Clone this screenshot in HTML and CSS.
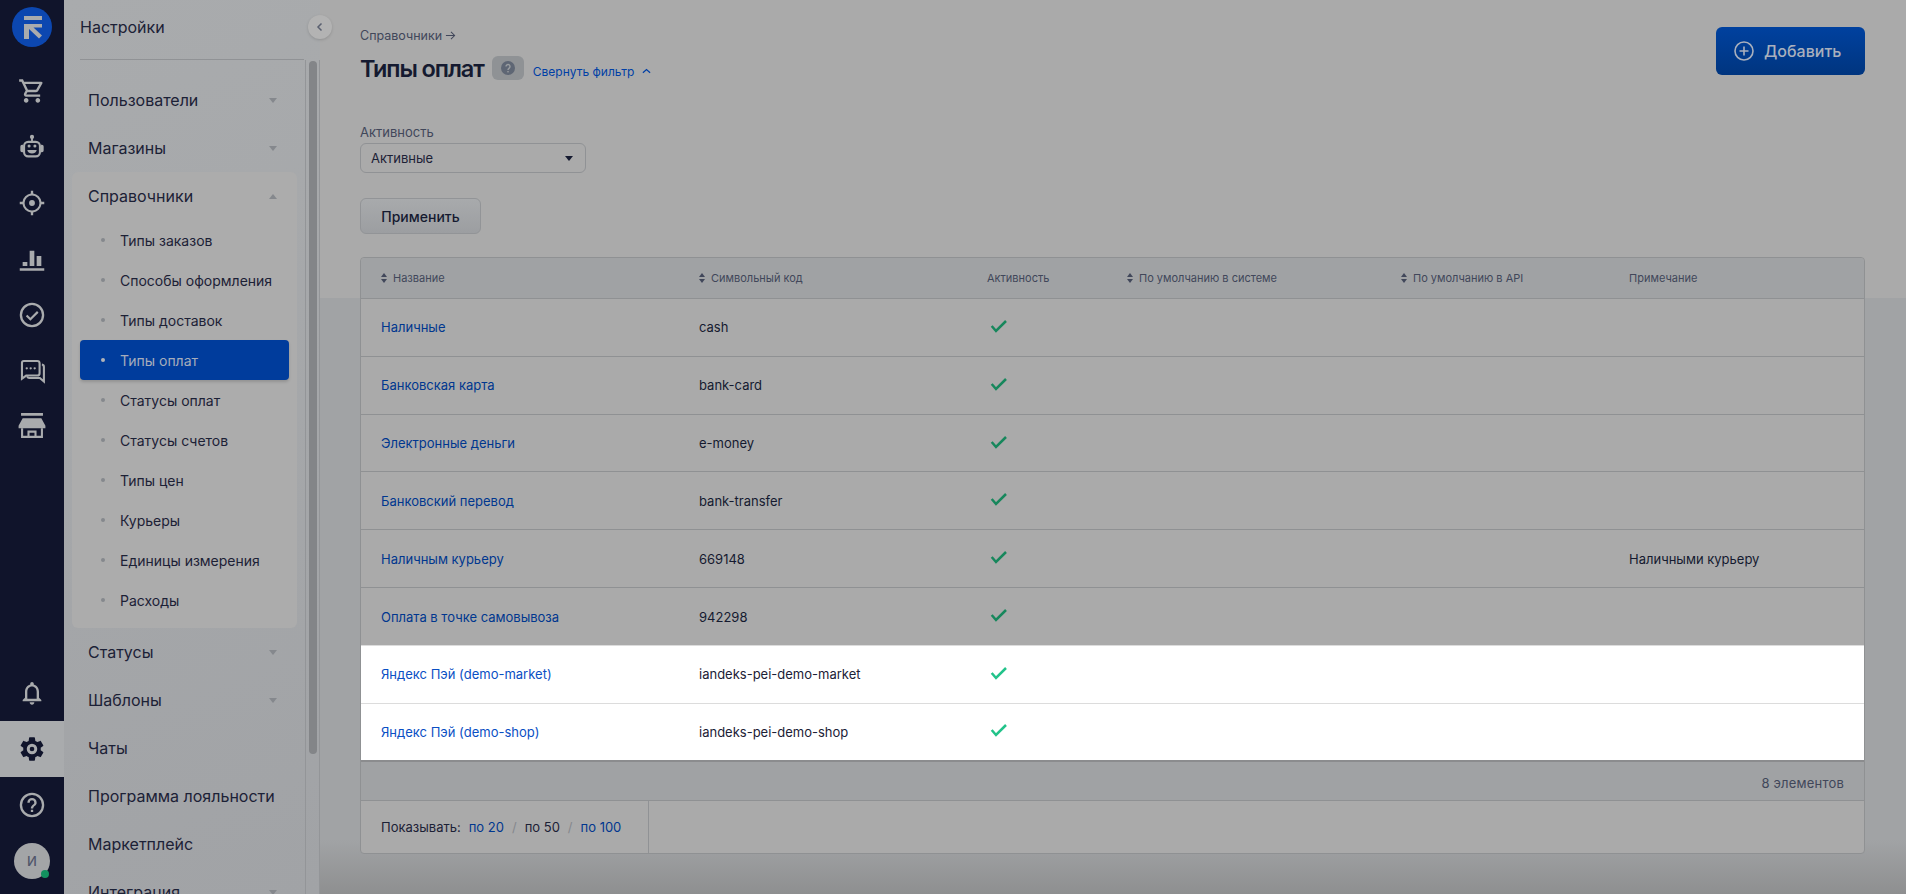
FILE: index.html
```html
<!DOCTYPE html>
<html lang="ru">
<head>
<meta charset="utf-8">
<title>Типы оплат</title>
<link rel="stylesheet" href="styles.css">
</head>
<body>
<div class="app">
  <nav class="rail">
    <a class="rail-logo"><svg viewBox="0 0 40 40" width="40" height="40"><circle cx="20" cy="20" r="20" fill="#0c47b0"/><path d="M12 9h18v4H12zM12 17h18v3.500h-8.500L30 28.500 27 31.500 17 22v10h-5z" fill="#a9abad"/></svg></a>
    <a class="rail-item"><svg viewBox="0 0 24 24" class="ico"><path d="M15.550 13c.75 0 1.410-.41 1.750-1.030l3.580-6.490A.996.996 0 0 0 20.010 4H5.210l-.94-2H1v2h2l3.600 7.590-1.350 2.440C4.520 15.370 5.480 17 7 17h12v-2H7l1.100-2h7.450zM6.160 6h12.150l-2.760 5H8.530L6.160 6zM7 18c-1.100 0-1.990.9-1.990 2S5.900 22 7 22s2-.9 2-2-.9-2-2-2zm10 0c-1.100 0-1.990.9-1.990 2s.89 2 1.990 2 2-.9 2-2-.9-2-2-2z"/></svg></a>
    <a class="rail-item"><svg viewBox="0 0 24 24" class="ico"><circle cx="12" cy="3.400" r="1.800"/><rect class="ico-cut" x="5.200" y="7.600" width="13.600" height="12.400" rx="3.500"/><path d="M11.200 4h1.600v4h-1.600zM2 11.500A1.500 1.500 0 0 1 3.500 10H4.300v6.500H3.500A1.500 1.500 0 0 1 2 15zM22 11.500A1.500 1.500 0 0 0 20.500 10H19.700v6.500H20.500A1.500 1.500 0 0 0 22 15zM8 14.500h8a4 3 0 0 1-8 0z"/><circle cx="9.500" cy="11.200" r="1.300"/><circle cx="14.500" cy="11.200" r="1.300"/></svg></a>
    <a class="rail-item"><svg viewBox="0 0 24 24" class="ico"><path d="M12 9.500a2.500 2.500 0 1 0 0 5 2.500 2.500 0 0 0 0-5zm8.100 1.500A8.200 8.200 0 0 0 13 3.900V1.500h-2v2.400A8.200 8.200 0 0 0 3.900 11H1.500v2h2.400A8.200 8.200 0 0 0 11 20.100v2.400h2v-2.400A8.200 8.200 0 0 0 20.100 13h2.400v-2zM12 18.400a6.400 6.400 0 1 1 0-12.800 6.400 6.400 0 0 1 0 12.800z"/></svg></a>
    <a class="rail-item"><svg viewBox="0 0 24 24" class="ico"><path d="M1.500 20h21v2h-21zM4 14.500h4V18H4zM10 5h4v13h-4zM16 9.500h4V18h-4z"/></svg></a>
    <a class="rail-item"><svg viewBox="0 0 24 24" class="ico"><path d="M12 1.500a10.500 10.500 0 1 0 0 21 10.500 10.500 0 0 0 0-21zm0 2a8.500 8.500 0 1 1 0 17 8.500 8.500 0 0 1 0-17zm4.300 5.100-5.700 5.700-2.600-2.500-1.300 1.300 3.900 3.900 7-7z"/></svg></a>
    <a class="rail-item"><svg viewBox="0 0 24 24" class="ico"><path class="ico-cut" d="M5 3.400h11.500a2 2 0 0 1 2 2v8.500a2 2 0 0 1-2 2H7L3.400 18.500V5a1.600 1.600 0 0 1 1.600-1.600z"/><path class="ico-cut" d="M20.500 6.500a2 2 0 0 1 1.700 2v12.500l-3.500-3H9.500a2 2 0 0 1-1.700-1.500"/><circle cx="7.500" cy="9.700" r="1"/><circle cx="10.900" cy="9.700" r="1"/><circle cx="14.300" cy="9.700" r="1"/></svg></a>
    <a class="rail-item"><svg viewBox="0 0 24 24" class="ico"><path d="M2.600 0h18.800v2.400H2.600zM4 4.500h16l3.500 6.500v2h-23v-2z"/><path class="ico-cut" d="M3.500 13v7.500h17V13M9 20.500V16h6v4.500"/></svg></a>
    <div class="rail-spacer"></div>
    <a class="rail-item rail-item-bell"><svg viewBox="0 0 24 24" class="ico"><path d="M12 22c1.100 0 2-.9 2-2h-4c0 1.100.9 2 2 2zm6-6v-5c0-3.070-1.630-5.640-4.500-6.320V4c0-.83-.67-1.500-1.500-1.500s-1.500.67-1.500 1.500v.68C7.640 5.360 6 7.920 6 11v5l-2 2v1h16v-1l-2-2zm-2 1H8v-6c0-2.480 1.510-4.500 4-4.500s4 2.020 4 4.500v6z"/></svg></a>
    <a class="rail-item rail-item-active"><svg viewBox="0 0 24 24" class="ico"><path d="M19.430 12.980c.04-.32.07-.64.07-.98s-.03-.66-.07-.98l2.110-1.650c.19-.15.24-.42.12-.64l-2-3.460c-.12-.22-.39-.3-.61-.22l-2.490 1c-.52-.4-1.080-.73-1.690-.98l-.38-2.650A.49.49 0 0 0 14 2h-4c-.25 0-.46.180-.49.420l-.38 2.650c-.61.25-1.170.59-1.690.98l-2.490-1c-.23-.09-.49 0-.61.220l-2 3.460c-.13.22-.07.490.12.64l2.110 1.650c-.04.32-.07.650-.07.980s.03.660.07.980l-2.110 1.650c-.19.150-.24.420-.12.640l2 3.460c.12.220.39.300.61.220l2.490-1c.52.400 1.080.730 1.690.980l.38 2.650c.03.240.24.420.49.420h4c.25 0 .46-.18.49-.42l.38-2.650c.61-.25 1.170-.59 1.690-.98l2.490 1c.23.090.49 0 .61-.22l2-3.460c.12-.22.070-.49-.12-.64l-2.110-1.650zM12 16.500a4.500 4.500 0 1 1 0-9 4.500 4.500 0 0 1 0 9zm0-2.500a2 2 0 1 0 0-4 2 2 0 0 0 0 4z" fill-rule="evenodd"/></svg></a>
    <a class="rail-item"><svg viewBox="0 0 24 24" class="ico"><path d="M12 1.500a10.500 10.500 0 1 0 0 21 10.500 10.500 0 0 0 0-21zm0 2a8.500 8.500 0 1 1 0 17 8.500 8.500 0 0 1 0-17zM11 16h2v2h-2zm1-10a4 4 0 0 0-4 4h2a2 2 0 1 1 4 0c0 2-3 1.750-3 5h2c0-2.250 3-2.500 3-5a4 4 0 0 0-4-4z"/></svg></a>
    <a class="rail-avatar"><span class="avatar">И<i class="avatar-dot"></i></span></a>
  </nav>

  <aside class="sidebar">
    <div class="side-title">Настройки</div>
    <button class="collapse" type="button" aria-label="Свернуть"><svg viewBox="0 0 10 10" width="10" height="10"><path d="M6.500 1.500 3 5l3.500 3.500" fill="none" stroke="#5a6070" stroke-width="1.500"/></svg></button>
    <div class="side-body">
      <div class="menu">
        <div class="menu-row"><span>Пользователи</span><i class="tri"></i></div>
        <div class="menu-row"><span>Магазины</span><i class="tri"></i></div>
        <div class="menu-group">
          <div class="menu-row"><span>Справочники</span><i class="tri tri-up"></i></div>
          <div class="sub"><i class="dot"></i>Типы заказов</div>
          <div class="sub"><i class="dot"></i>Способы оформления</div>
          <div class="sub"><i class="dot"></i>Типы доставок</div>
          <div class="sub sub-active"><i class="dot"></i>Типы оплат</div>
          <div class="sub"><i class="dot"></i>Статусы оплат</div>
          <div class="sub"><i class="dot"></i>Статусы счетов</div>
          <div class="sub"><i class="dot"></i>Типы цен</div>
          <div class="sub"><i class="dot"></i>Курьеры</div>
          <div class="sub"><i class="dot"></i>Единицы измерения</div>
          <div class="sub"><i class="dot"></i>Расходы</div>
        </div>
        <div class="menu-row"><span>Статусы</span><i class="tri"></i></div>
        <div class="menu-row"><span>Шаблоны</span><i class="tri"></i></div>
        <div class="menu-row"><span>Чаты</span></div>
        <div class="menu-row"><span>Программа лояльности</span></div>
        <div class="menu-row"><span>Маркетплейс</span></div>
        <div class="menu-row"><span>Интеграция</span><i class="tri"></i></div>
      </div>
      <div class="track"><div class="thumb"></div></div>
    </div>
  </aside>

  <main class="main">
    <header class="head">
      <div class="head-left">
        <div class="crumb">Справочники <svg viewBox="0 0 12 12" width="11" height="11"><path d="M1 6h9.500M6.500 2l4 4-4 4" fill="none" stroke="#41475a" stroke-width="1.100"/></svg></div>
        <div class="title-row">
          <h1 class="title">Типы оплат</h1>
          <span class="help"><svg viewBox="0 0 14 14" width="14" height="14"><circle cx="7" cy="7" r="7" fill="#5e6674"/><path d="M5 5.500a2 2 0 1 1 3.200 1.600C7.400 7.700 7 8 7 9" fill="none" stroke="#9a9da0" stroke-width="1.400"/><rect x="6.300" y="10" width="1.400" height="1.400" fill="#9a9da0"/></svg></span>
          <a class="toggle">Свернуть фильтр<svg viewBox="0 0 10 6" width="9" height="6"><path d="M1 5l4-3.500L9 5" fill="none" stroke="#003fa6" stroke-width="1.400"/></svg></a>
        </div>
      </div>
      <button class="add" type="button"><svg viewBox="0 0 20 20" width="20" height="20"><circle cx="10" cy="10" r="9" fill="none" stroke="#a9b0bd" stroke-width="1.600"/><path d="M10 5.500v9M5.500 10h9" stroke="#a9b0bd" stroke-width="1.600"/></svg>Добавить</button>
    </header>

    <section class="filter">
      <div class="filter-label">Активность</div>
      <div class="select"><span>Активные</span><i class="select-tri"></i></div>
      <button class="apply" type="button">Применить</button>
    </section>

    <section class="table">
      <div class="grid thead">
        <div class="th"><i class="sort"></i>Название</div>
        <div class="th"><i class="sort"></i>Символьный код</div>
        <div class="th">Активность</div>
        <div class="th"><i class="sort"></i>По умолчанию в системе</div>
        <div class="th"><i class="sort"></i>По умолчанию в API</div>
        <div class="th">Примечание</div>
      </div>
      <div class="grid row"><a class="cell-link">Наличные</a><div>cash</div><div class="chk"><svg viewBox="0 0 18 14" width="18" height="14"><path d="M1.700 7 6 12 16 2"/></svg></div></div>
      <div class="grid row"><a class="cell-link">Банковская карта</a><div>bank-card</div><div class="chk"><svg viewBox="0 0 18 14" width="18" height="14"><path d="M1.700 7 6 12 16 2"/></svg></div></div>
      <div class="grid row"><a class="cell-link">Электронные деньги</a><div>e-money</div><div class="chk"><svg viewBox="0 0 18 14" width="18" height="14"><path d="M1.700 7 6 12 16 2"/></svg></div></div>
      <div class="grid row"><a class="cell-link">Банковский перевод</a><div>bank-transfer</div><div class="chk"><svg viewBox="0 0 18 14" width="18" height="14"><path d="M1.700 7 6 12 16 2"/></svg></div></div>
      <div class="grid row"><a class="cell-link">Наличным курьеру</a><div>669148</div><div class="chk"><svg viewBox="0 0 18 14" width="18" height="14"><path d="M1.700 7 6 12 16 2"/></svg></div><div></div><div></div><div>Наличными курьеру</div></div>
      <div class="grid row row-last-dim"><a class="cell-link">Оплата в точке самовывоза</a><div>942298</div><div class="chk"><svg viewBox="0 0 18 14" width="18" height="14"><path d="M1.700 7 6 12 16 2"/></svg></div></div>
      <div class="grid row row-hi"><a class="cell-link">Яндекс Пэй (demo-market)</a><div>iandeks-pei-demo-market</div><div class="chk"><svg viewBox="0 0 18 14" width="18" height="14"><path d="M1.700 7 6 12 16 2"/></svg></div></div>
      <div class="grid row row-hi row-hi-last"><a class="cell-link">Яндекс Пэй (demo-shop)</a><div>iandeks-pei-demo-shop</div><div class="chk"><svg viewBox="0 0 18 14" width="18" height="14"><path d="M1.700 7 6 12 16 2"/></svg></div></div>
      <div class="count">8 элементов</div>
      <div class="pager">
        <div class="pager-box">
          <span class="pager-label">Показывать:</span>
          <a class="pg-link">по 20</a><i class="pg-sep">/</i><span>по 50</span><i class="pg-sep">/</i><a class="pg-link">по 100</a>
        </div>
      </div>
    </section>
  </main>
</div>
</body>
</html>
```

FILE: styles.css
```css
* { box-sizing: border-box; }
html, body { margin: 0; height: 100%; overflow: hidden; }
body { font-family: Inter, "Noto Sans", sans-serif; color: #151a30; background: #aaa; }
a { color: inherit; text-decoration: none; }
i { font-style: normal; }
button { font-family: inherit; }

.app { display: flex; width: 1906px; height: 894px; overflow: hidden; }

/* Rail */
.rail { flex: 0 0 64px; display: flex; flex-direction: column; background: #10142b; padding-bottom: 5px; }
.rail-logo { height: 63px; display: flex; justify-content: center; padding-top: 7px; }
.rail-item { height: 56px; flex: none; display: flex; align-items: center; justify-content: center; }
.rail-item-bell { height: 57px; }
.ico { width: 28px; height: 28px; fill: #a9abad; }
.ico-cut { fill: none; stroke: #a9abad; stroke-width: 1.800; }
.rail-spacer { flex: 1; }
.rail-item-active { background: #a9abad; }
.rail-item-active .ico { fill: #10142b; }
.rail-avatar { height: 56px; flex: none; display: flex; align-items: center; justify-content: center; }
.avatar { position: relative; width: 36px; height: 36px; border-radius: 50%; background: #a3a5a7; color: #50566a; font-size: 13px; font-weight: 500; display: flex; align-items: center; justify-content: center; }
.avatar-dot { position: absolute; right: 1px; bottom: 1px; width: 8px; height: 8px; border-radius: 50%; background: #12915f; }

/* Sidebar */
.sidebar { position: relative; flex: 0 0 256px; display: flex; flex-direction: column; background: linear-gradient(160deg, #a9abad, #a1a3a6); }
.side-title { margin: 0 16px; height: 60px; border-bottom: 1px solid #909295; font-size: 16px; line-height: 55px; color: #1c2136; }
.collapse { position: absolute; z-index: 2; top: 15px; right: -12px; width: 24px; height: 24px; padding: 0; border: 0; border-radius: 50%; background: #b3b3b3; box-shadow: 0 1px 3px rgba(0,0,0,.15); display: flex; align-items: center; justify-content: center; }
.side-body { flex: 1; min-height: 0; display: flex; padding-left: 8px; overflow: hidden; }
.menu { width: 225px; padding-top: 16px; margin-right: 8px; flex: none; }
.menu-row { height: 48px; flex: none; display: flex; align-items: center; justify-content: space-between; padding: 0 20px 0 16px; font-size: 16px; color: #1c2136; }
.tri { width: 0; height: 0; border-left: 4px solid transparent; border-right: 4px solid transparent; border-top: 5px solid #85888d; }
.tri-up { border-top: 0; border-bottom: 5px solid #85888d; }
.menu-group { background: #acacac; border-radius: 6px; padding-bottom: 8px; }
.sub { height: 40px; margin: 0 8px; padding-left: 21px; display: flex; align-items: center; gap: 15px; font-size: 14px; color: #1c2136; border-radius: 4px; }
.dot { width: 4px; height: 4px; border-radius: 50%; background: #85888d; }
.sub-active { background: #003c9c; color: #a6adbb; box-shadow: 0 2px 3px rgba(0,0,0,.15); }
.sub-active .dot { background: #b0b3b8; }
.track { flex: 1; position: relative; border-left: 1px solid #939598; border-right: 1px solid #939598; padding: 0 2px 0 3px; }
.thumb { height: 693px; margin-top: 1px; background: #838588; border-radius: 4px; }

/* Main */
.main { flex: 1; min-width: 0; padding: 0 41px 0 40px; background: linear-gradient(#aaa 298px, #a1a3a5 298px, #a1a3a5 840px, #8e8f90 894px); }
.head { display: flex; justify-content: space-between; align-items: flex-start; }
.head-left { padding-top: 27px; }
.crumb { height: 16px; display: flex; align-items: center; gap: 3px; font-size: 12.500px; color: #41475a; }
.title-row { margin-top: 8px; height: 34px; display: flex; align-items: center; }
.title { margin: 0; font-size: 23.500px; font-weight: 600; letter-spacing: -1.100px; color: #151a30; }
.help { margin-left: 8px; width: 32px; height: 24px; border-radius: 6px; background: #8f9295; display: flex; align-items: center; justify-content: center; }
.toggle { margin: 6px 0 0 9px; display: flex; align-items: center; gap: 8px; font-size: 12px; color: #003fa6; }
.add { margin-top: 27px; width: 149px; height: 48px; border: 0; border-radius: 6px; background: linear-gradient(#00419f, #00357f); color: #a9b0bd; font-size: 16px; font-weight: 500; display: flex; align-items: center; padding: 0 0 0 18px; gap: 10px; }

.filter { margin-top: 39px; }
.filter-label { height: 16px; line-height: 16px; font-size: 13px; color: #41475a; }
.select { margin-top: 3px; width: 226px; height: 30px; border: 1px solid #909295; border-radius: 6px; display: flex; align-items: center; justify-content: space-between; padding: 0 12px 0 10px; font-size: 13px; color: #1c2136; }
.select-tri { width: 0; height: 0; border-left: 4px solid transparent; border-right: 4px solid transparent; border-top: 5px solid #151a30; }
.apply { display: block; margin-top: 25px; width: 121px; height: 36px; padding: 0; border: 1px solid #929497; border-radius: 6px; background: linear-gradient(#a8aaac, #9c9ea1); color: #151a30; font-size: 14px; font-weight: 500; }

.table { margin-top: 23px; width: 1505px; height: 597px; border: 1px solid #8f9193; border-radius: 4px; background: #aaa; }
.grid { display: grid; grid-template-columns: 318px 288px 140px 274px 228px 1fr; padding-left: 20px; align-items: center; }
.thead { height: 41px; background: #a0a2a4; border-bottom: 1px solid #8f9193; border-radius: 4px 4px 0 0; }
.th { display: flex; align-items: center; font-size: 11px; color: #41475a; }
.sort { position: relative; width: 7px; height: 10px; margin-right: 5px; }
.sort::before, .sort::after { content: ""; position: absolute; left: 0; width: 0; height: 0; border-left: 3.500px solid transparent; border-right: 3.500px solid transparent; }
.sort::before { top: 0; border-bottom: 4px solid #41475a; }
.sort::after { bottom: 0; border-top: 4px solid #41475a; }
.row { height: 57.830px; border-bottom: 1px solid #8f9193; font-size: 13px; color: #151a30; }
.cell-link { color: #00378f; }
.chk { padding-left: 3px; margin-top: -3px; }
.chk svg { display: block; fill: none; stroke: #17875c; stroke-width: 2.500; }
.row-last-dim { border-bottom-color: #dcdcdc; }
.row-hi { background: #fff; border-bottom-color: #dcdcdc; color: #1c2136; }
.row-hi .cell-link { color: #0a4fc4; }
.row-hi .chk svg { stroke: #22c38a; }
.row-hi-last { height: 58px; border-bottom: 2px solid #8b8c8e; }
.count { height: 39px; padding: 5px 20px 0 0; background: #a0a2a4; border-bottom: 1px solid #8f9193; display: flex; align-items: center; justify-content: flex-end; font-size: 13px; letter-spacing: .2px; color: #41475a; }
.pager { height: 52px; display: flex; }
.pager-box { width: 288px; padding: 1px 0 0 20px; border-right: 1px solid #909295; display: flex; align-items: center; font-size: 13px; color: #1c2136; }
.pager-label { margin-right: 8px; }
.pg-link { color: #00378f; }
.pg-sep { margin: 0 8px; color: #85888d; }
```
